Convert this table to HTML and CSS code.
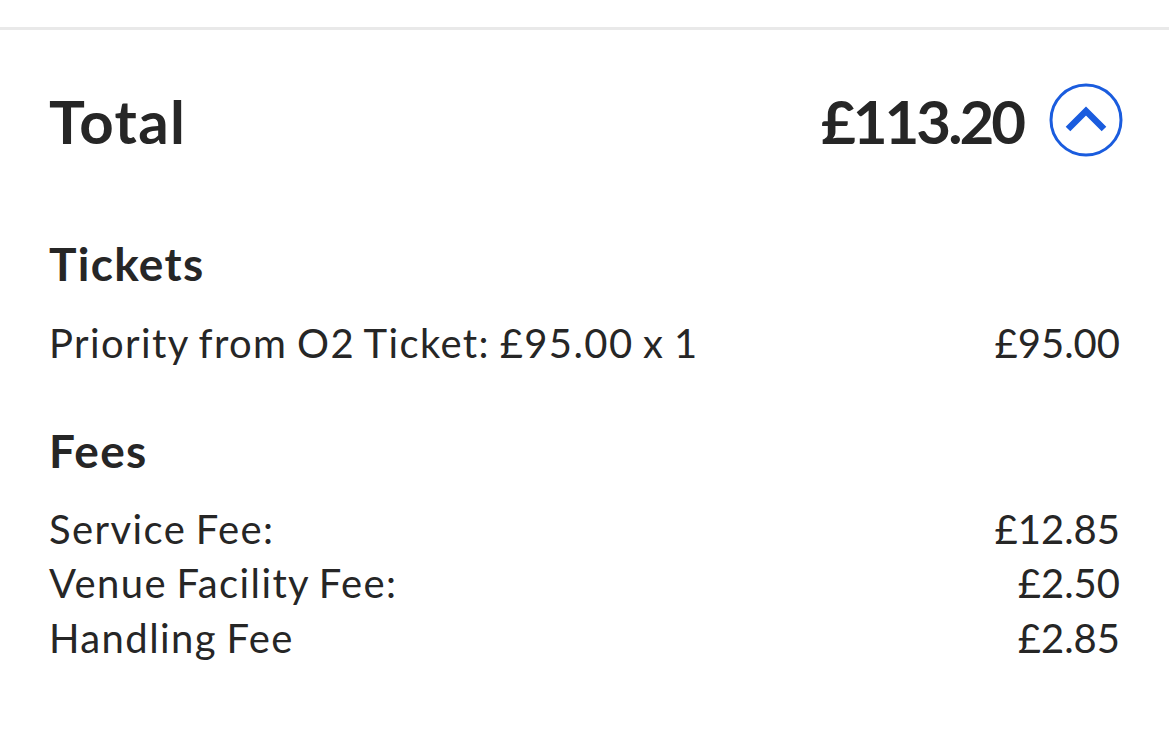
FILE: index.html
```html
<!DOCTYPE html>
<html lang="en">
<head>
<meta charset="utf-8">
<title>Order total</title>
<link rel="stylesheet" href="styles.css">
</head>
<body>
<div class="divider"></div>
<main class="summary">
  <header class="total-row">
    <h1 class="total-label">Total</h1>
    <div class="total-right">
      <span class="total-amount">£113.20</span>
      <button class="toggle" aria-label="Collapse">
        <svg width="74" height="74" viewBox="0 0 74 74">
          <circle cx="37" cy="37" r="35" fill="none" stroke="#1a5cde" stroke-width="3"/>
          <path d="M19 46 L37 28 L55 46" fill="none" stroke="#1a5cde" stroke-width="6.5" stroke-linejoin="miter"/>
        </svg>
      </button>
    </div>
  </header>

  <section class="group group-tickets">
    <h2 class="group-title">Tickets</h2>
    <div class="line"><span class="label">Priority from O2 Ticket: £95.00 x 1</span><span class="amount">£95.00</span></div>
  </section>

  <section class="group group-fees">
    <h2 class="group-title">Fees</h2>
    <div class="line"><span class="label">Service Fee:</span><span class="amount">£12.85</span></div>
    <div class="line"><span class="label">Venue Facility Fee:</span><span class="amount">£2.50</span></div>
    <div class="line"><span class="label">Handling Fee</span><span class="amount">£2.85</span></div>
  </section>
</main>
</body>
</html>
```

FILE: styles.css
```css
* { box-sizing: border-box; }
html, body {
  margin: 0;
  padding: 0;
  background: #ffffff;
  color: #262626;
  font-family: "Lato", "Open Sans", sans-serif;
}
.divider {
  margin-top: 27px;
  height: 3px;
  background: #e9e9e9;
}
.summary {
  padding: 0 49px 0 49px;
}
.total-row {
  height: 182px;
  display: flex;
  align-items: center;
  justify-content: space-between;
}
.total-label {
  margin: 0;
  font-size: 60px;
  font-weight: 700;
  line-height: 1;
  letter-spacing: 1.4px;
}
.total-right {
  display: flex;
  align-items: center;
  gap: 26px;
  margin-right: -3px;
}
.total-amount {
  font-size: 60px;
  font-weight: 700;
  line-height: 1;
  letter-spacing: -3px;
}
.toggle {
  padding: 0;
  margin: 0 0 2px 0;
  border: 0;
  background: none;
  display: block;
  width: 74px;
  height: 74px;
}
.toggle svg { display: block; }
.group-title {
  margin: 0;
  font-size: 46px;
  font-weight: 700;
  line-height: 56px;
  letter-spacing: 1.3px;
}
.group-tickets { margin-top: 24px; }
.group-tickets .group-title { margin-bottom: 24px; }
.group-fees { margin-top: 52px; }
.group-fees .group-title { margin-bottom: 23px; }
.line {
  display: flex;
  justify-content: space-between;
  font-size: 40px;
  line-height: 54.5px;
}
.label {
  letter-spacing: 1.4px;
  word-spacing: -2px;
}
```
